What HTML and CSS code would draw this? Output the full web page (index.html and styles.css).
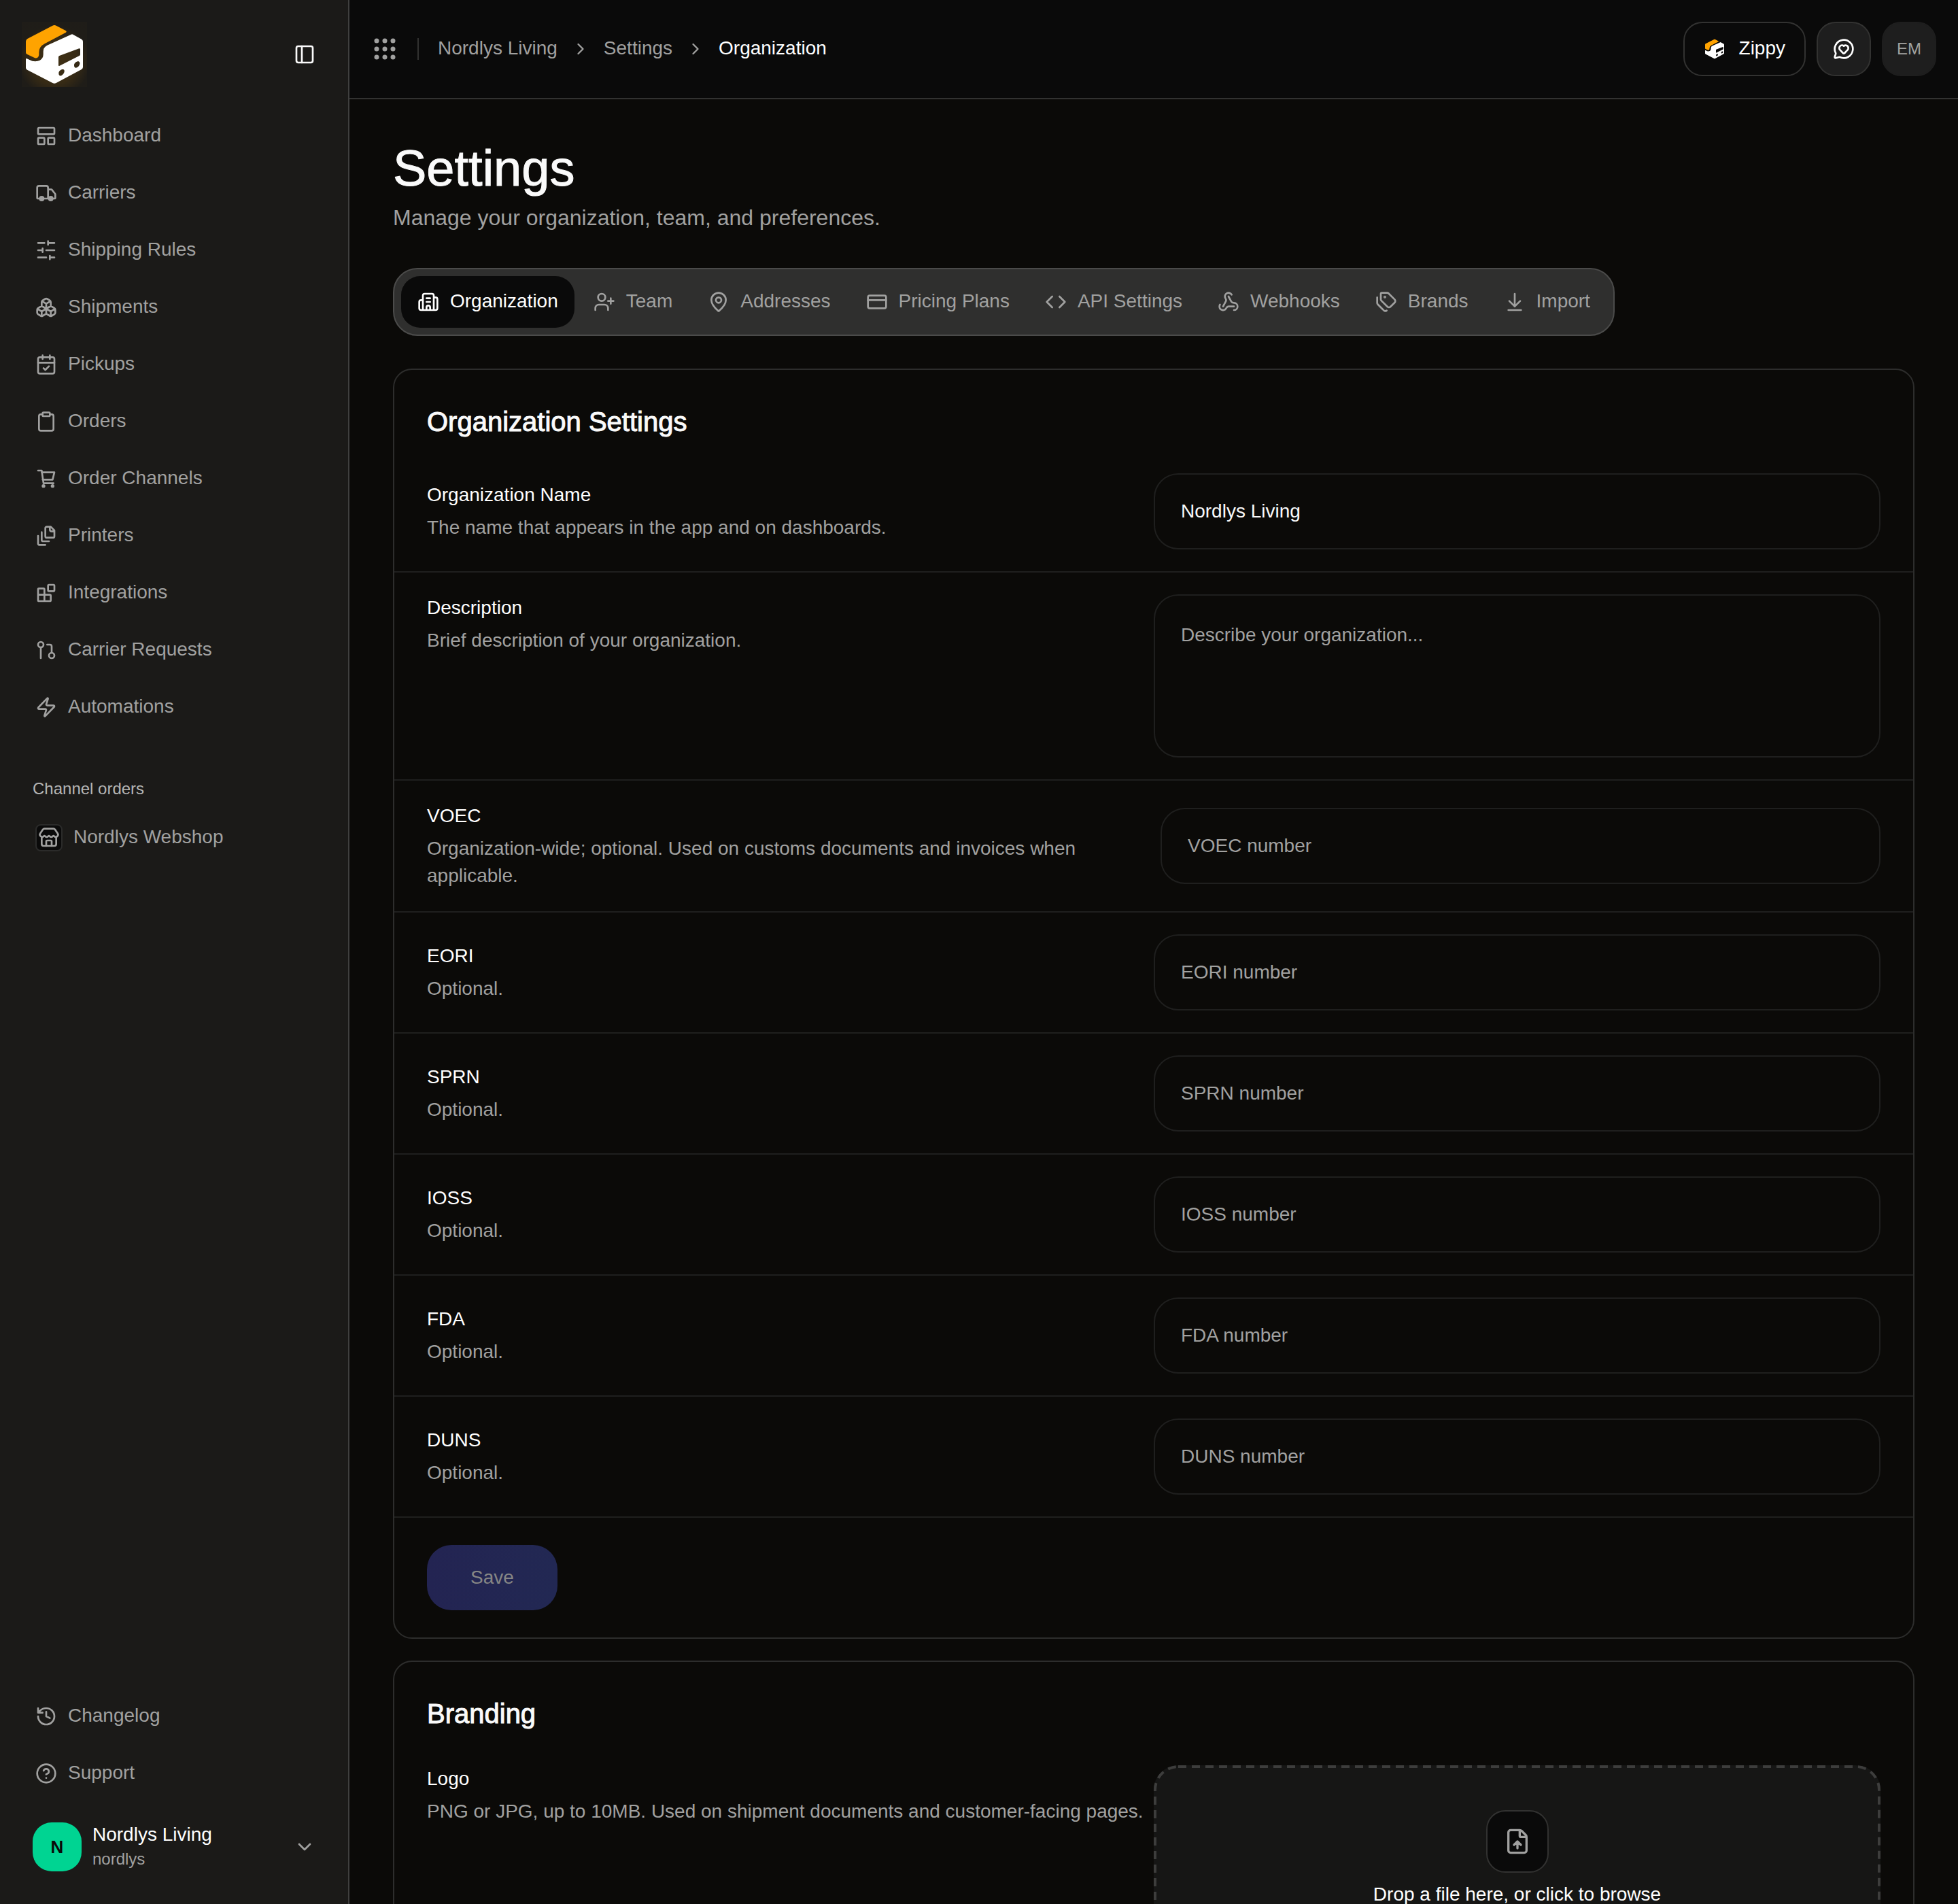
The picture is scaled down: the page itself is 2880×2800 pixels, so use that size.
FILE: index.html
```html
<!DOCTYPE html>
<html lang="en">
<head>
<meta charset="UTF-8">
<title>Settings - Organization</title>
<link rel="stylesheet" href="styles.css">
</head>
<body>
<!-- icon set -->
<svg class="sprite" width="0" height="0" aria-hidden="true">
	<symbol id="logo" viewBox="0 0 288 288">
		<path fill="#ffa300" d="M136 17q8-4 16 0l43 23q5 4 0 7l-94 50q-25 13-25 38v10q-1 18-18 15l-35-17q-5-2-5-7V87q0-8 7-12z"/>
		<path fill="#fff" fill-rule="evenodd" d="M218 56q4-3 8 0l38 21q6 4 6 11v112q0 6-6 10l-112 60q-8 4-16 0L24 212q-6-3-6-9v-38q0-5 5-2l23 10q20 4 34-3 15-9 15-27v-12q0-18 17-27zM166 150q-4 2-4 6v35q0 6 5 3l87-44q4-2 4-6v-22q0-6-5-4zM163 227c0 11 7 14 14 9 10-6 15-20 8-25-8-4-22 5-22 16zM231 192c0 11 7 14 14 9 10-6 15-20 8-25-8-4-22 5-22 16z"/>
	</symbol>
	<symbol id="panel" viewBox="0 0 24 24"><rect x="3" y="3" width="18" height="18" rx="2"/><path d="M9 3v18"/></symbol>
	<symbol id="dashboard" viewBox="0 0 24 24"><rect x="3" y="3" width="18" height="7" rx="1"/><rect x="3" y="14" width="7" height="7" rx="1"/><rect x="14" y="14" width="7" height="7" rx="1"/></symbol>
	<symbol id="truck" viewBox="0 0 24 24"><path d="M14 18V6a2 2 0 0 0-2-2H4a2 2 0 0 0-2 2v11a1 1 0 0 0 1 1h2M15 18H9M19 18h2a1 1 0 0 0 1-1v-3.65a1 1 0 0 0-.22-.62l-3.48-4.35A1 1 0 0 0 17.52 8H14"/><circle cx="17" cy="18" r="2" fill="currentColor"/><circle cx="7" cy="18" r="2" fill="currentColor"/></symbol>
	<symbol id="sliders" viewBox="0 0 24 24"><path d="M21 4h-7M10 4H3M21 12h-9M8 12H3M21 20h-5M12 20H3M14 2v4M8 10v4M16 18v4"/></symbol>
	<symbol id="boxes" viewBox="0 0 24 24"><path d="M2.97 12.92A2 2 0 0 0 2 14.63v3.24a2 2 0 0 0 .97 1.71l3 1.8a2 2 0 0 0 2.06 0L12 19v-5.5l-5-3-4.03 2.42ZM7 16.5l-4.74-2.85M7 16.5l5-3M7 16.5v5.17M12 13.5V19l3.97 2.38a2 2 0 0 0 2.06 0l3-1.8a2 2 0 0 0 .97-1.71v-3.24a2 2 0 0 0-.97-1.71L17 10.5l-5 3ZM17 16.5l-5-3M17 16.5l4.74-2.85M17 16.5v5.17M7.97 4.42A2 2 0 0 0 7 6.13v4.37l5 3 5-3V6.13a2 2 0 0 0-.97-1.71l-3-1.8a2 2 0 0 0-2.06 0l-3 1.8ZM12 8 7.26 5.15M12 8l4.74-2.85M12 13.5V8"/></symbol>
	<symbol id="calendar" viewBox="0 0 24 24"><rect x="3" y="4" width="18" height="18" rx="2"/><path d="M8 2v4M16 2v4M3 10h18M9 16l2 2 4-4"/></symbol>
	<symbol id="clipboard" viewBox="0 0 24 24"><rect x="8" y="2" width="8" height="4" rx="1"/><path d="M16 4h2a2 2 0 0 1 2 2v14a2 2 0 0 1-2 2H6a2 2 0 0 1-2-2V6a2 2 0 0 1 2-2h2"/></symbol>
	<symbol id="cart" viewBox="0 0 24 24"><path d="M3 3h4l2 14h11M7 5h14l-2 8H8"/><circle cx="9" cy="20" r="1" fill="currentColor"/><circle cx="19" cy="20" r="1" fill="currentColor"/></symbol>
	<symbol id="stack" viewBox="0 0 24 24"><path d="M21 7h-3a2 2 0 0 1-2-2V2M21 6v6.5c0 .8-.7 1.5-1.5 1.5h-7c-.8 0-1.5-.7-1.5-1.5v-9c0-.8.7-1.5 1.5-1.5H17ZM7 8v8.8c0 .3.2.6.4.8.2.2.5.4.8.4H15M3 12v8.8c0 .3.2.6.4.8.2.2.5.4.8.4H11"/></symbol>
	<symbol id="blocks" viewBox="0 0 24 24"><rect x="14" y="3" width="7" height="7" rx="1"/><path d="M10 21V8a1 1 0 0 0-1-1H4a1 1 0 0 0-1 1v12a1 1 0 0 0 1 1h12a1 1 0 0 0 1-1v-5a1 1 0 0 0-1-1H3"/></symbol>
	<symbol id="request" viewBox="0 0 24 24"><circle cx="18" cy="18" r="3"/><circle cx="6" cy="6" r="3"/><path d="M13 6h3a2 2 0 0 1 2 2v7M6 9v12"/></symbol>
	<symbol id="zap" viewBox="0 0 24 24"><path d="M4 14a1 1 0 0 1-.78-1.63l9.9-10.2a.5.5 0 0 1 .86.46l-1.92 6.02A1 1 0 0 0 13 10h7a1 1 0 0 1 .78 1.63l-9.9 10.2a.5.5 0 0 1-.86-.46l1.92-6.02A1 1 0 0 0 11 14z"/></symbol>
	<symbol id="store" viewBox="0 0 24 24"><path d="M15 21v-5a1 1 0 0 0-1-1h-4a1 1 0 0 0-1 1v5"/><path d="M17.774 10.31a1.12 1.12 0 0 0-1.549 0 2.5 2.5 0 0 1-3.451 0 1.12 1.12 0 0 0-1.548 0 2.5 2.5 0 0 1-3.452 0 1.12 1.12 0 0 0-1.549 0 2.5 2.5 0 0 1-3.77-3.248l2.889-4.184A2 2 0 0 1 7 2h10a2 2 0 0 1 1.653.873l2.895 4.192a2.5 2.5 0 0 1-3.774 3.244"/><path d="M4 10.95V19a2 2 0 0 0 2 2h12a2 2 0 0 0 2-2v-8.05"/></symbol>
	<symbol id="history" viewBox="0 0 24 24"><path d="M3 12a9 9 0 1 0 9-9 9.75 9.75 0 0 0-6.74 2.74L3 8M3 3v5h5M12 7v5l4 2"/></symbol>
	<symbol id="help" viewBox="0 0 24 24"><circle cx="12" cy="12" r="10"/><path d="M9.09 9a3 3 0 0 1 5.83 1c0 2-3 3-3 3M12 17h.01"/></symbol>
	<symbol id="down" viewBox="0 0 24 24"><path d="m6 9 6 6 6-6"/></symbol>
	<symbol id="next" viewBox="0 0 24 24"><path d="m9 18 6-6-6-6"/></symbol>
	<symbol id="grid" viewBox="0 0 32 32"><g fill="currentColor" stroke="none"><circle cx="4" cy="4" r="3.5"/><circle cx="16" cy="4" r="3.5"/><circle cx="28" cy="4" r="3.5"/><circle cx="4" cy="16" r="3.5"/><circle cx="16" cy="16" r="3.5"/><circle cx="28" cy="16" r="3.5"/><circle cx="4" cy="28" r="3.5"/><circle cx="16" cy="28" r="3.5"/><circle cx="28" cy="28" r="3.5"/></g></symbol>
	<symbol id="chat" viewBox="0 0 24 24"><path d="M2.992 16.342a2 2 0 0 1 .094 1.167l-1.065 3.29a1 1 0 0 0 1.236 1.168l3.413-.998a2 2 0 0 1 1.099.092 10 10 0 1 0-4.777-4.719"/><path d="M7.828 13.07A3 3 0 0 1 12 8.764a3 3 0 0 1 5.004 2.224 3 3 0 0 1-.832 2.083l-3.447 3.62a1 1 0 0 1-1.45-.001z"/></symbol>
	<symbol id="building" viewBox="0 0 24 24"><path d="M10 12h4M10 8h4M14 21v-3a2 2 0 0 0-4 0v3M6 10H4a2 2 0 0 0-2 2v7a2 2 0 0 0 2 2h16a2 2 0 0 0 2-2V9a2 2 0 0 0-2-2h-2M6 21V5a2 2 0 0 1 2-2h8a2 2 0 0 1 2 2v16"/></symbol>
	<symbol id="user" viewBox="0 0 24 24"><circle cx="9" cy="7" r="4"/><path d="M16 21v-2a4 4 0 0 0-4-4H6a4 4 0 0 0-4 4v2M19 8v6M22 11h-6"/></symbol>
	<symbol id="pin" viewBox="0 0 24 24"><path d="M20 10c0 4.993-5.539 10.193-7.399 11.799a1 1 0 0 1-1.202 0C9.539 20.193 4 14.993 4 10a8 8 0 0 1 16 0"/><circle cx="12" cy="10" r="3"/></symbol>
	<symbol id="card" viewBox="0 0 24 24"><rect x="2" y="5" width="20" height="14" rx="2"/><path d="M2 10h20"/></symbol>
	<symbol id="code" viewBox="0 0 24 24"><path d="m16 18 6-6-6-6M8 6l-6 6 6 6"/></symbol>
	<symbol id="webhook" viewBox="0 0 24 24"><path d="M18 16.98h-5.99c-1.1 0-1.95.94-2.48 1.9A4 4 0 0 1 2 17c.01-.7.2-1.4.57-2"/><path d="m6 17 3.13-5.78c.53-.97.1-2.18-.5-3.1a4 4 0 1 1 6.89-4.06"/><path d="m12 6 3.13 5.73C15.66 12.7 16.9 13 18 13a4 4 0 0 1 0 8"/></symbol>
	<symbol id="tags" viewBox="0 0 24 24"><path d="M13.172 2a2 2 0 0 1 1.414.586l6.71 6.71a2.4 2.4 0 0 1 0 3.408l-4.592 4.592a2.4 2.4 0 0 1-3.408 0l-6.71-6.71A2 2 0 0 1 6 9.172V3a1 1 0 0 1 1-1z"/><path d="M2 7v6.172a2 2 0 0 0 .586 1.414l6.71 6.71a2.4 2.4 0 0 0 3.191.193"/><circle cx="10.5" cy="6.5" r=".5" fill="currentColor"/></symbol>
	<symbol id="import" viewBox="0 0 24 24"><path d="M12 17V3M6 11l6 6 6-6M19 21H5"/></symbol>
	<symbol id="upload" viewBox="0 0 24 24"><path d="M6 22a2 2 0 0 1-2-2V4a2 2 0 0 1 2-2h8a2.4 2.4 0 0 1 1.704.706l3.588 3.588A2.4 2.4 0 0 1 20 8v12a2 2 0 0 1-2 2zM14 2v5a1 1 0 0 0 1 1h5M12 12v6M15 15l-3-3-3 3"/></symbol>
</svg>

<div class="app">
	<aside class="sidebar">
		<div class="sidebar-top">
			<a href="#" class="logo" aria-label="Home"><svg><use href="#logo"/></svg></a>
			<button type="button" class="icon-btn" aria-label="Toggle sidebar"><svg class="icon"><use href="#panel"/></svg></button>
		</div>
		<nav class="nav">
			<a href="#"><svg class="icon"><use href="#dashboard"/></svg><span>Dashboard</span></a>
			<a href="#"><svg class="icon"><use href="#truck"/></svg><span>Carriers</span></a>
			<a href="#"><svg class="icon"><use href="#sliders"/></svg><span>Shipping Rules</span></a>
			<a href="#"><svg class="icon"><use href="#boxes"/></svg><span>Shipments</span></a>
			<a href="#"><svg class="icon"><use href="#calendar"/></svg><span>Pickups</span></a>
			<a href="#"><svg class="icon"><use href="#clipboard"/></svg><span>Orders</span></a>
			<a href="#"><svg class="icon"><use href="#cart"/></svg><span>Order Channels</span></a>
			<a href="#"><svg class="icon"><use href="#stack"/></svg><span>Printers</span></a>
			<a href="#"><svg class="icon"><use href="#blocks"/></svg><span>Integrations</span></a>
			<a href="#"><svg class="icon"><use href="#request"/></svg><span>Carrier Requests</span></a>
			<a href="#"><svg class="icon"><use href="#zap"/></svg><span>Automations</span></a>
		</nav>
		<h2 class="nav-title">Channel orders</h2>
		<nav class="nav">
			<a href="#"><i class="shop"><svg class="icon"><use href="#store"/></svg></i><span>Nordlys Webshop</span></a>
		</nav>
		<nav class="nav nav-bottom">
			<a href="#"><svg class="icon"><use href="#history"/></svg><span>Changelog</span></a>
			<a href="#"><svg class="icon"><use href="#help"/></svg><span>Support</span></a>
		</nav>
		<button type="button" class="account">
			<span class="account-avatar">N</span>
			<span class="account-text"><span class="account-name">Nordlys Living</span><span class="account-slug">nordlys</span></span>
			<svg class="icon"><use href="#down"/></svg>
		</button>
	</aside>

	<div class="page">
		<header class="header">
			<button type="button" class="icon-btn apps" aria-label="Apps"><svg><use href="#grid"/></svg></button>
			<nav class="crumbs">
				<a href="#">Nordlys Living</a>
				<svg class="icon"><use href="#next"/></svg>
				<a href="#">Settings</a>
				<svg class="icon"><use href="#next"/></svg>
				<span class="current">Organization</span>
			</nav>
			<div class="actions">
				<button type="button" class="zippy"><svg><use href="#logo"/></svg><span>Zippy</span></button>
				<button type="button" class="square" aria-label="Feedback"><svg class="icon"><use href="#chat"/></svg></button>
				<button type="button" class="square user">EM</button>
			</div>
		</header>

		<main class="content">
			<h1>Settings</h1>
			<p class="lead">Manage your organization, team, and preferences.</p>

			<nav class="tabs">
				<a href="#" class="active"><svg class="icon"><use href="#building"/></svg><span>Organization</span></a>
				<a href="#"><svg class="icon"><use href="#user"/></svg><span>Team</span></a>
				<a href="#"><svg class="icon"><use href="#pin"/></svg><span>Addresses</span></a>
				<a href="#"><svg class="icon"><use href="#card"/></svg><span>Pricing Plans</span></a>
				<a href="#"><svg class="icon"><use href="#code"/></svg><span>API Settings</span></a>
				<a href="#"><svg class="icon"><use href="#webhook"/></svg><span>Webhooks</span></a>
				<a href="#"><svg class="icon"><use href="#tags"/></svg><span>Brands</span></a>
				<a href="#"><svg class="icon"><use href="#import"/></svg><span>Import</span></a>
			</nav>

			<form class="panel">
				<h2>Organization Settings</h2>
				<div class="row">
					<div class="info"><label for="name">Organization Name</label><p>The name that appears in the app and on dashboards.</p></div>
					<input type="text" id="name" value="Nordlys Living">
				</div>
				<div class="row row-top">
					<div class="info"><label for="description">Description</label><p>Brief description of your organization.</p></div>
					<textarea id="description" placeholder="Describe your organization..."></textarea>
				</div>
				<div class="row row-gap">
					<div class="info"><label for="voec">VOEC</label><p>Organization-wide; optional. Used on customs documents and invoices when applicable.</p></div>
					<input type="text" id="voec" placeholder="VOEC number">
				</div>
				<div class="row">
					<div class="info"><label for="eori">EORI</label><p>Optional.</p></div>
					<input type="text" id="eori" placeholder="EORI number">
				</div>
				<div class="row">
					<div class="info"><label for="sprn">SPRN</label><p>Optional.</p></div>
					<input type="text" id="sprn" placeholder="SPRN number">
				</div>
				<div class="row">
					<div class="info"><label for="ioss">IOSS</label><p>Optional.</p></div>
					<input type="text" id="ioss" placeholder="IOSS number">
				</div>
				<div class="row">
					<div class="info"><label for="fda">FDA</label><p>Optional.</p></div>
					<input type="text" id="fda" placeholder="FDA number">
				</div>
				<div class="row">
					<div class="info"><label for="duns">DUNS</label><p>Optional.</p></div>
					<input type="text" id="duns" placeholder="DUNS number">
				</div>
				<div class="panel-foot">
					<button type="submit" class="save" disabled>Save</button>
				</div>
			</form>

			<section class="panel">
				<h2>Branding</h2>
				<div class="row row-top">
					<div class="info"><label for="logo-file">Logo</label><p>PNG or JPG, up to 10MB. Used on shipment documents and customer-facing pages.</p></div>
					<label class="drop">
						<svg class="drop-line" aria-hidden="true"><rect x="2" y="2" rx="34"/></svg>
						<input type="file" id="logo-file" class="file">
						<span class="drop-icon"><svg class="icon"><use href="#upload"/></svg></span>
						<span>Drop a file here, or click to browse</span>
					</label>
				</div>
			</section>
		</main>
	</div>
</div>
</body>
</html>
```
FILE: styles.css
```css
* {
	box-sizing: border-box;
}
body {
	margin: 0;
	background: #0b0a08;
	color: #fafafa;
	font-family: "Liberation Sans", Arial, sans-serif;
	font-size: 28px;
	line-height: 40px;
}
h1, h2, p {
	margin: 0;
	font-weight: normal;
}
a {
	color: inherit;
	text-decoration: none;
}
button, input, textarea {
	font: inherit;
	color: inherit;
}
button {
	padding: 0;
	border: 0;
	background: none;
	cursor: pointer;
}
.sprite {
	display: none;
}
.icon {
	flex: none;
	width: 32px;
	height: 32px;
	fill: none;
	stroke: currentColor;
	stroke-width: 2;
	stroke-linecap: round;
	stroke-linejoin: round;
}
.icon-btn {
	display: flex;
}
.app {
	display: flex;
	height: 100vh;
	overflow: hidden;
}

/* sidebar */
.sidebar {
	display: flex;
	flex-direction: column;
	flex: none;
	width: 514px;
	border-right: 2px solid #3f3f3e;
	background: #1b1a18;
	color: #a1a1a0;
}
.sidebar-top {
	display: flex;
	align-items: center;
	justify-content: space-between;
	padding: 32px 48px 32px 32px;
	color: #fafafa;
}
.logo {
	background: radial-gradient(circle at 50% 60%, rgba(255, 163, 0, .16), rgba(255, 163, 0, .12) 45%, rgba(255, 163, 0, .02) 70%);
}
.logo svg {
	display: block;
	width: 96px;
	height: 96px;
}
.nav {
	display: flex;
	flex-direction: column;
	gap: 4px;
	padding: 0 24px;
}
.nav a {
	display: flex;
	align-items: center;
	gap: 16px;
	height: 80px;
	padding: 0 28px;
}
.nav span, .crumbs a, .crumbs span, .tabs span, .zippy span {
	padding-bottom: 2px;
}
.nav-title {
	padding: 64px 48px 16px;
	color: #b5b5b4;
	font-size: 24px;
	line-height: 32px;
}
.shop {
	display: flex;
	align-items: center;
	justify-content: center;
	width: 40px;
	height: 40px;
	border: 2px solid #2b2b2a;
	border-radius: 8px;
	background: #0a0a0a;
}
.nav-bottom {
	margin-top: auto;
}
.account {
	display: flex;
	align-items: center;
	gap: 16px;
	padding: 32px 48px 48px;
	text-align: left;
}
.account-avatar {
	width: 72px;
	border-radius: 28px;
	background: #00d492;
	color: #0a0a0a;
	font-size: 26px;
	font-weight: bold;
	line-height: 72px;
	text-align: center;
}
.account-text {
	display: flex;
	flex: 1;
	flex-direction: column;
	line-height: 36px;
}
.account-name {
	color: #fff;
}
.account-slug {
	font-size: 24px;
}

/* header */
.page {
	display: flex;
	flex: 1;
	flex-direction: column;
	min-width: 0;
}
.header {
	display: flex;
	flex: none;
	align-items: center;
	padding: 32px;
	border-bottom: 2px solid #323231;
	background: #0a0a0a;
	color: #a1a1a0;
}
.apps {
	margin: 0 32px 0 4px;
}
.apps svg {
	width: 32px;
	height: 32px;
}
.crumbs {
	display: flex;
	align-items: center;
	gap: 20px;
}
.crumbs::before {
	content: "";
	width: 2px;
	height: 32px;
	margin-right: 8px;
	background: #323231;
}
.crumbs .icon {
	width: 28px;
	height: 28px;
}
.crumbs .current {
	color: #fff;
}
.actions {
	display: flex;
	gap: 16px;
	margin-left: auto;
	color: #fff;
}
.zippy {
	display: flex;
	align-items: center;
	gap: 20px;
	height: 80px;
	padding: 0 28px;
	border: 2px solid #323231;
	border-radius: 28px;
}
.zippy svg {
	width: 32px;
	height: 32px;
}
.square {
	display: flex;
	align-items: center;
	justify-content: center;
	width: 80px;
	height: 80px;
	border: 2px solid #323231;
	border-radius: 28px;
	background: #1e1e1e;
}
.user {
	border-color: #1e1e1e;
	color: #a1a1a0;
	font-size: 24px;
}

/* content */
.content {
	flex: 1;
	min-height: 0;
	padding: 64px;
	overflow: hidden;
}
h1 {
	font-size: 74px;
	line-height: 76px;
}
.lead {
	margin: 8px 0 48px;
	color: #a1a1a0;
	font-size: 32px;
	line-height: 52px;
}
.tabs {
	display: flex;
	gap: 4px;
	width: fit-content;
	padding: 10px;
	border: 2px solid #4b4b4a;
	border-radius: 36px;
	background: #2f2f2e;
	color: #a1a1a0;
}
.tabs a {
	display: flex;
	align-items: center;
	gap: 16px;
	height: 76px;
	padding: 0 24px;
	border-radius: 28px;
}
.tabs .active {
	background: #0a0a0a;
	color: #fff;
}
.panel {
	margin-top: 48px;
	border: 2px solid #2d2d2c;
	border-radius: 28px;
}
.panel + .panel {
	margin-top: 32px;
}
.panel h2 {
	padding: 48px 48px 16px;
	font-size: 40px;
	line-height: 56px;
}
.row {
	display: grid;
	grid-template-columns: 1fr 1fr;
	align-items: center;
	padding: 32px 48px;
	border-bottom: 2px solid #1f1f1e;
}
.row-top {
	align-items: start;
}
.row-gap {
	column-gap: 20px;
}
.info label {
	display: block;
	margin-bottom: 8px;
	color: #fff;
}
.info p {
	color: #a1a1a0;
}
.row input[type=text], textarea {
	display: block;
	width: 100%;
	height: 112px;
	padding: 0 38px;
	border: 2px solid #1f1f1e;
	border-radius: 36px;
	background: none;
	outline: none;
}
.row textarea {
	height: 240px;
	padding: 38px;
	resize: none;
}
::placeholder {
	color: #a1a1a0;
}
.panel-foot {
	padding: 40px 48px;
}
.save {
	display: block;
	width: 192px;
	height: 96px;
	border-radius: 36px;
	background: linear-gradient(to right, #232452, #222853);
	color: #868685;
}

/* logo upload */
.drop {
	position: relative;
	display: flex;
	flex-direction: column;
	align-items: center;
	gap: 12px;
	padding: 66px;
	border-radius: 36px;
	background: #161615;
	color: #fff;
}
.drop-line {
	position: absolute;
	inset: 0;
	width: 100%;
	height: 100%;
}
.drop-line rect {
	width: calc(100% - 4px);
	height: calc(100% - 4px);
	fill: none;
	stroke: #3d3d3c;
	stroke-width: 4;
	stroke-dasharray: 12 8;
}
.file {
	position: absolute;
	opacity: 0;
	pointer-events: none;
}
.drop-icon {
	display: flex;
	align-items: center;
	justify-content: center;
	width: 92px;
	height: 92px;
	border: 2px solid #323231;
	border-radius: 28px;
	background: #0a0a0a;
	color: #a1a1a0;
}
.drop-icon .icon {
	width: 40px;
	height: 40px;
}

/* medium weight headings */
h1, .panel h2 {
	-webkit-text-stroke: 1px currentColor;
}
```
